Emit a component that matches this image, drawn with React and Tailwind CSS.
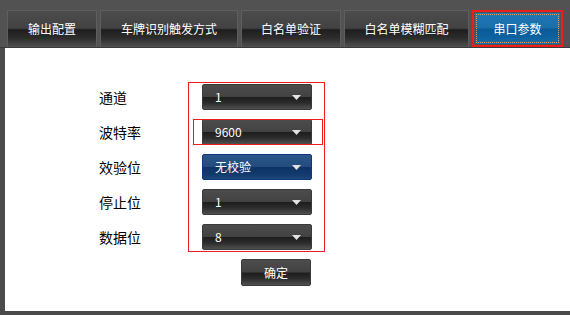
import React from 'react'

const tabs = [
  { label: '输出配置', w: 'w-[90px]' },
  { label: '车牌识别触发方式', w: 'w-[138px]' },
  { label: '白名单验证', w: 'w-[100px]' },
  { label: '白名单模糊匹配', w: 'w-[125px]' },
]

const darkGrad = 'bg-[linear-gradient(to_bottom,#4c4c4c_0%,#424242_48%,#1e1e1e_52%,#2c2c2c_75%,#505050_100%)]'
const blueGrad = 'bg-[linear-gradient(to_bottom,#1f78b6_0%,#1a6eaa_48%,#0a5b98_52%,#0d62a0_80%,#1a6eaa_100%)]'

const Arrow = () => (
  <svg width="9" height="5" viewBox="0 0 9 5" className="shrink-0">
    <polygon points="0,0 9,0 4.5,5" fill="#e2e2e2" />
  </svg>
)

const Select = ({ value, blue }) => (
  <div
    className={
      'w-[110px] h-[26px] rounded-[2px] flex items-center justify-between pl-[12px] pr-[10px] text-[12px] text-white ' +
      (blue
        ? 'border border-[#0e3a7c] bg-[linear-gradient(to_bottom,#2c5688_0%,#244c7e_48%,#0e3366_52%,#133a6e_80%,#1d4677_100%)]'
        : 'border border-[#3a3a3a] ' + darkGrad)
    }
  >
    <span>{value}</span>
    <Arrow />
  </div>
)

const labels = ['通道', '波特率', '效验位', '停止位', '数据位']

export default function App() {
  return (
    <div className="w-[570px] h-[315px] flex flex-col bg-white overflow-hidden" style={{ fontFamily: '"Noto Sans CJK SC", "Liberation Sans", sans-serif' }}>
      <div className="h-[48px] shrink-0 bg-[#525252] pt-[10px] pl-[7px] flex gap-[3px] border-b border-[#3a3a3a]">
        {tabs.map(t => (
          <div key={t.label} className={t.w + ' h-[37px] flex items-center justify-center text-[12px] text-white border-t border-x border-[#5e5e5e] ' + darkGrad}>
            {t.label}
          </div>
        ))}
        <div className="w-[91px] h-[37px] border-2 border-[#ee1c1c] p-[1px]">
          <div className={'w-full h-full flex items-center justify-center text-[12px] text-white outline outline-1 outline-dotted outline-[#e8a060] -outline-offset-2 ' + blueGrad}>
            串口参数
          </div>
        </div>
      </div>
      <div className="flex-1 border-l-[5px] border-b-[4px] border-[#4b4b4b] flex pt-[34px]">
        <div className="w-[183px] pl-[94px] -mt-[2px] flex flex-col text-[14px] text-black">
          {labels.map(l => (
            <div key={l} className="h-[35px] flex items-center">{l}</div>
          ))}
        </div>
        <div className="flex flex-col">
          <div className="w-[137px] border border-[#ee1c1c] py-[1px] flex flex-col gap-[9px]">
            <div className="pl-[13px]"><Select value="1" /></div>
            <div className="ml-[4px] mr-[1px] h-[26px] border border-[#ee1c1c] pl-[8px] overflow-hidden">
              <div className="-mt-[1px]"><Select value="9600" /></div>
            </div>
            <div className="pl-[13px]"><Select value="无校验" blue /></div>
            <div className="pl-[13px]"><Select value="1" /></div>
            <div className="pl-[13px]"><Select value="8" /></div>
          </div>
          <div className={'ml-[53px] mt-[7px] w-[70px] h-[27px] rounded-[2px] border border-[#3a3a3a] flex items-center justify-center text-[12px] text-white ' + darkGrad}>
            确定
          </div>
        </div>
      </div>
    </div>
  )
}
